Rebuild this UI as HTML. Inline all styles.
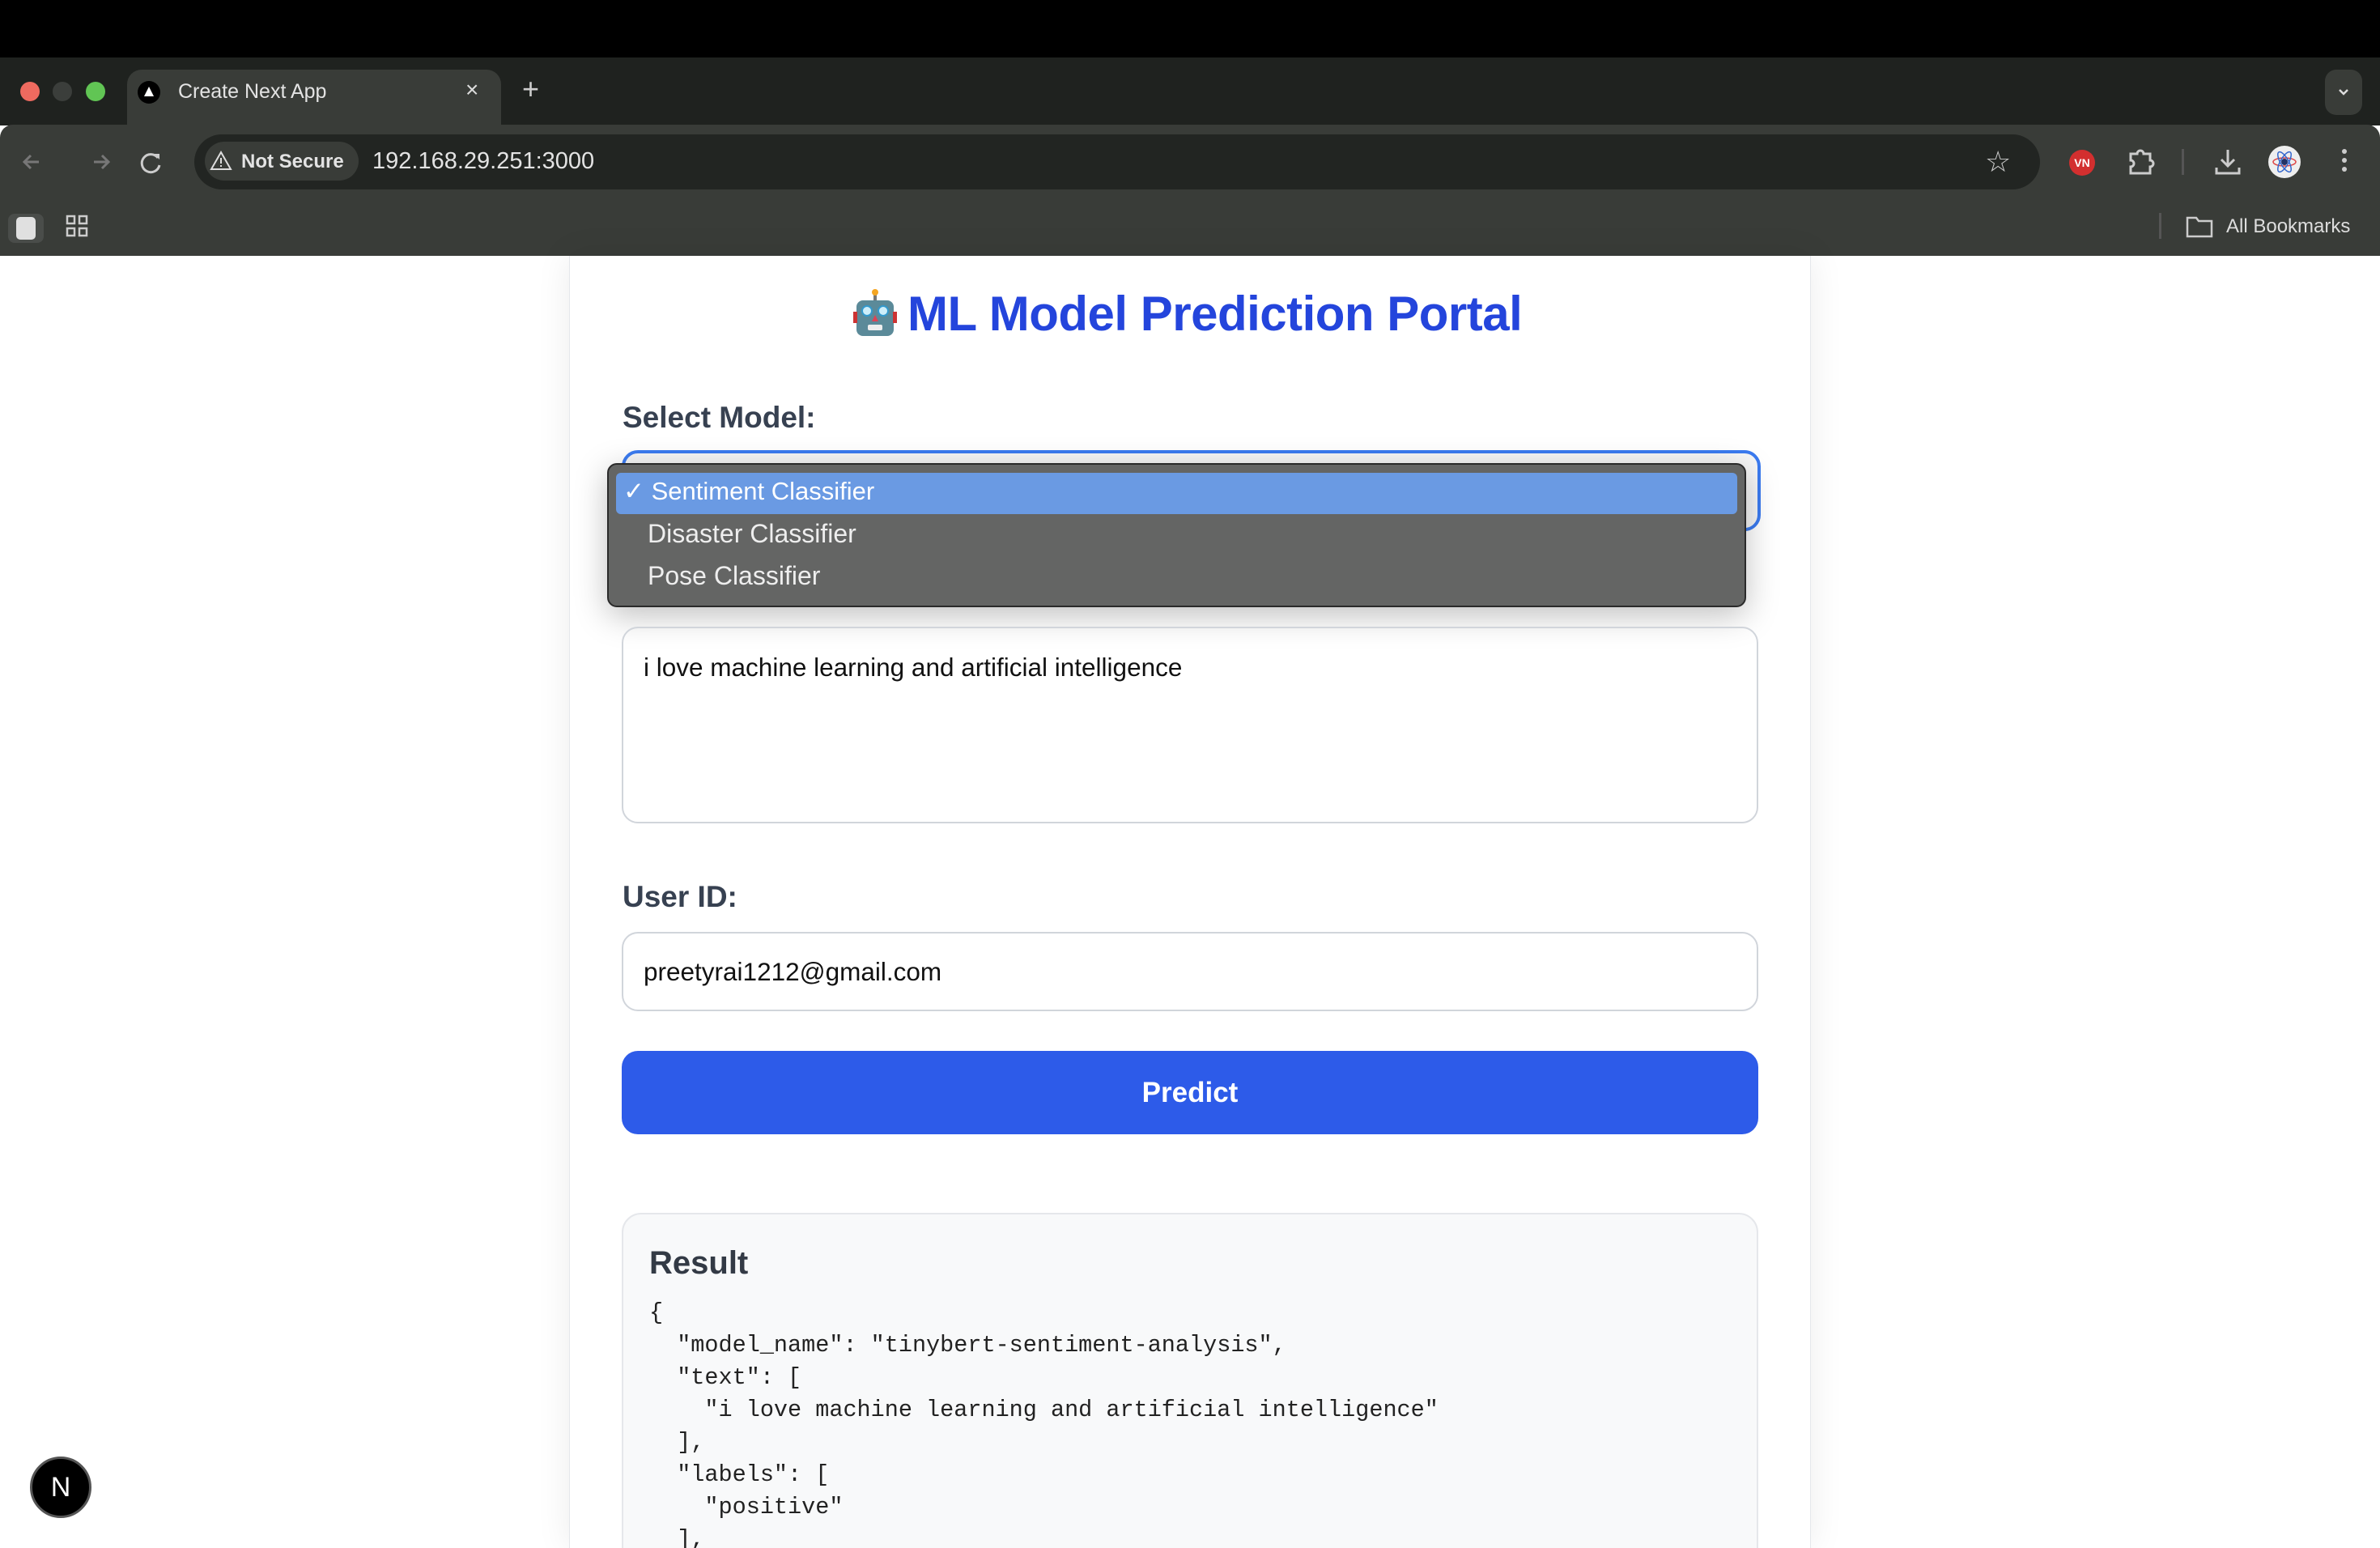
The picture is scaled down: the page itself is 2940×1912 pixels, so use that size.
<!DOCTYPE html>
<html style="width:2940px;height:1912px;overflow:hidden"><head><meta charset="utf-8"><style>
*{box-sizing:border-box;margin:0;padding:0}
body{width:2940px;height:1912px;overflow:hidden;background:#fff;font-family:"Liberation Sans",sans-serif;position:relative}
.abs{position:absolute}
</style></head><body>
<div class="abs" style="left:0;top:0;width:2940px;height:71px;background:#000"></div>
<div class="abs" style="left:0;top:71px;width:2940px;height:84px;background:#1f221f"></div>
<div class="abs" style="left:25px;top:101px;width:24px;height:24px;border-radius:50%;background:#ee6a5f"></div>
<div class="abs" style="left:65px;top:101px;width:24px;height:24px;border-radius:50%;background:#3b3e3b"></div>
<div class="abs" style="left:106px;top:101px;width:24px;height:24px;border-radius:50%;background:#61c554"></div>
<div class="abs" style="left:157px;top:86px;width:462px;height:70px;background:#393c38;border-radius:18px 18px 0 0"></div>
<div class="abs" style="left:170px;top:100px;width:28px;height:28px;border-radius:50%;background:#000"></div>
<svg class="abs" style="left:176px;top:105px" width="16" height="16" viewBox="0 0 16 16"><path d="M8 2 L14 14 L2 14Z" fill="#fff"/></svg>
<div class="abs" style="left:220px;top:99px;color:#e3e3e3;font-size:25px">Create Next App</div>
<div class="abs" style="left:575px;top:95px;color:#ddd;font-size:28px">×</div>
<div class="abs" style="left:645px;top:89px;color:#ccc;font-size:36px">+</div>
<div class="abs" style="left:2872px;top:86px;width:46px;height:56px;background:#393c38;border-radius:14px"></div>
<svg class="abs" style="left:2885px;top:103px" width="20" height="20" viewBox="0 0 20 20"><path d="M5 8l5 5 5-5" stroke="#ddd" stroke-width="2.5" fill="none"/></svg>
<div class="abs" style="left:0;top:154px;width:2940px;height:162px;background:#393c38;border-radius:16px 16px 0 0"></div>
<svg class="abs" style="left:24px;top:182px" width="140" height="36" viewBox="0 0 140 36"><g stroke="#777" stroke-width="3" fill="none"><path d="M24 18H6M14 10l-8 8 8 8"/><path d="M92 18h18M102 10l8 8-8 8" /></g></svg>
<svg class="abs" style="left:170px;top:184px" width="34" height="34" viewBox="0 0 34 34"><path d="M25 11a11 11 0 1 0 2 9" stroke="#ccc" stroke-width="3" fill="none"/><path d="M20 6h7v7z" fill="#ccc"/></svg>
<div class="abs" style="left:240px;top:166px;width:2280px;height:68px;background:#222522;border-radius:34px"></div>
<div class="abs" style="left:253px;top:175px;width:190px;height:48px;background:#393c38;border-radius:24px"></div>
<svg class="abs" style="left:258px;top:183px" width="30" height="30" viewBox="0 0 30 30"><path d="M15 5 L27 26 H3Z" stroke="#ddd" stroke-width="2" fill="none"/><path d="M15 12v7M15 21v2" stroke="#ddd" stroke-width="2"/></svg>
<div class="abs" style="left:298px;top:186px;color:#e3e3e3;font-size:24px;font-weight:bold">Not Secure</div>
<div class="abs" style="left:460px;top:183px;color:#e3e3e3;font-size:29px">192.168.29.251:3000</div>
<div class="abs" style="left:2452px;top:179px;color:#ccc;font-size:36px">☆</div>
<div class="abs" style="left:2556px;top:185px;width:32px;height:32px;border-radius:50%;background:#d32f2f;color:#fff;font-size:14px;font-weight:bold;text-align:center;line-height:32px">VN</div>
<svg class="abs" style="left:2628px;top:182px" width="34" height="36" viewBox="0 0 34 36"><path d="M4 8h8a4 4 0 0 1 8 0h8v8a4 4 0 0 1 0 8v8H4v-8a4 4 0 0 0 0-8z" stroke="#ccc" stroke-width="3" fill="none"/></svg>
<div class="abs" style="left:2695px;top:184px;width:3px;height:32px;background:#555"></div>
<svg class="abs" style="left:2735px;top:182px" width="34" height="36" viewBox="0 0 34 36"><path d="M17 3v20M9 15l8 8 8-8M3 25v7h28v-7" stroke="#ccc" stroke-width="3" fill="none"/></svg>
<div class="abs" style="left:2802px;top:180px;width:40px;height:40px;border-radius:50%;background:#eee"></div>
<svg class="abs" style="left:2802px;top:180px" width="40" height="40" viewBox="0 0 40 40"><g fill="none" stroke-width="1.5"><ellipse cx="20" cy="20" rx="14" ry="5" stroke="#d44"/><ellipse cx="20" cy="20" rx="14" ry="5" stroke="#36c" transform="rotate(60 20 20)"/><ellipse cx="20" cy="20" rx="14" ry="5" stroke="#36c" transform="rotate(-60 20 20)"/></g><circle cx="20" cy="20" r="4" fill="#236"/></svg>
<div class="abs" style="left:2893px;top:184px;width:6px;height:6px;border-radius:50%;background:#ccc;box-shadow:0 11px 0 #ccc,0 22px 0 #ccc"></div>
<div class="abs" style="left:10px;top:264px;width:44px;height:36px;border-radius:8px;background:#4a4d4a"></div>
<div class="abs" style="left:20px;top:268px;width:24px;height:28px;border-radius:5px;background:#e0e0e0"></div>
<svg class="abs" style="left:80px;top:264px" width="30" height="30" viewBox="0 0 30 30"><g fill="none" stroke="#ccc" stroke-width="2.5"><rect x="3" y="3" width="9" height="9"/><rect x="18" y="3" width="9" height="9"/><rect x="3" y="18" width="9" height="9"/><rect x="18" y="18" width="9" height="9"/></g></svg>
<div class="abs" style="left:2667px;top:263px;width:3px;height:32px;background:#555"></div>
<svg class="abs" style="left:2700px;top:266px" width="34" height="28" viewBox="0 0 34 28"><path d="M2 3h11l3 4h16v19H2z" stroke="#ccc" stroke-width="2.5" fill="none"/></svg>
<div class="abs" style="left:2750px;top:266px;color:#ddd;font-size:24px">All Bookmarks</div>

<div class="abs" style="left:703px;top:316px;width:1534px;height:1596px;background:#fff;border-left:1px solid #e5e7eb;border-right:1px solid #e5e7eb;box-shadow:0 0 40px rgba(0,0,0,0.08)"></div>
<svg class="abs" style="left:1050px;top:357px" width="62" height="62" viewBox="0 0 62 62"><rect x="8" y="14" width="46" height="44" rx="8" fill="#5b8a99"/><rect x="4" y="28" width="5" height="14" fill="#c33"/><rect x="53" y="28" width="5" height="14" fill="#c33"/><rect x="29" y="4" width="4" height="10" fill="#777"/><circle cx="31" cy="4" r="4" fill="#f5a623"/><circle cx="21" cy="27" r="6" fill="#cdeefa" stroke="#39c" stroke-width="2"/><circle cx="41" cy="27" r="6" fill="#cdeefa" stroke="#39c" stroke-width="2"/><path d="M31 32l-4 8h8z" fill="#d45"/><rect x="22" y="44" width="18" height="7" rx="2" fill="#eee"/></svg>
<div class="abs" style="left:1121px;top:353px;color:#2445dc;font-size:60px;font-weight:bold;letter-spacing:-0.5px;white-space:nowrap">ML Model Prediction Portal</div>
<div class="abs" style="left:769px;top:495px;color:#374151;font-size:37px;font-weight:bold">Select Model:</div>
<div class="abs" style="left:768px;top:556px;width:1407px;height:100px;border:4px solid #3b7bf0;border-radius:20px;background:#f6f6f6"></div>
<div class="abs" style="left:750px;top:572px;width:1407px;height:178px;background:#646564;border:2px solid #2a2a2a;border-radius:12px;box-shadow:0 10px 40px rgba(0,0,0,0.25)"></div>
<div class="abs" style="left:761px;top:584px;width:1385px;height:51px;background:#6a9ae3;border-radius:6px"></div>
<div class="abs" style="left:770px;top:589px;color:#fff;font-size:31px;white-space:nowrap">✓ Sentiment Classifier</div>
<div class="abs" style="left:800px;top:641px;color:#eee;font-size:32px">Disaster Classifier</div>
<div class="abs" style="left:800px;top:693px;color:#eee;font-size:32px">Pose Classifier</div>
<div class="abs" style="left:768px;top:774px;width:1404px;height:243px;border:2px solid #d1d5db;border-radius:20px"></div>
<div class="abs" style="left:795px;top:806px;color:#111;font-size:31.5px">i love machine learning and artificial intelligence</div>
<div class="abs" style="left:769px;top:1087px;color:#374151;font-size:37px;font-weight:bold">User ID:</div>
<div class="abs" style="left:768px;top:1151px;width:1404px;height:98px;border:2px solid #d1d5db;border-radius:20px"></div>
<div class="abs" style="left:795px;top:1182px;color:#111;font-size:31.5px">preetyrai1212@gmail.com</div>
<div class="abs" style="left:768px;top:1298px;width:1404px;height:103px;background:#2d5be9;border-radius:20px;color:#fff;font-size:35px;font-weight:bold;text-align:center;line-height:103px">Predict</div>
<div class="abs" style="left:768px;top:1498px;width:1404px;height:440px;border:2px solid #e5e7eb;border-radius:24px;background:#f8f9fa"></div>
<div class="abs" style="left:802px;top:1538px;color:#333a45;font-size:40px;font-weight:bold">Result</div>
<pre class="abs" style="left:802px;top:1602px;color:#222;font-family:'Liberation Mono','DejaVu Sans Mono',monospace;font-size:28.5px;line-height:40px">{
  "model_name": "tinybert-sentiment-analysis",
  "text": [
    "i love machine learning and artificial intelligence"
  ],
  "labels": [
    "positive"
  ],</pre>
<div class="abs" style="left:37px;top:1799px;width:76px;height:76px;border-radius:50%;background:#000;border:3px solid #555;color:#fff;font-size:34px;text-align:center;line-height:70px">N</div>
</body></html>
